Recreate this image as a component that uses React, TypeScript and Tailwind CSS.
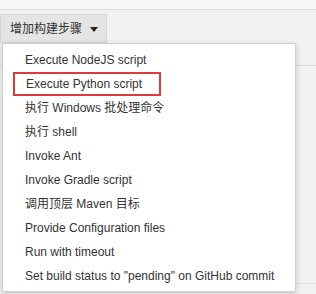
import React from "react";

const ITEMS = [
  "Execute NodeJS script",
  "Execute Python script",
  "执行 Windows 批处理命令",
  "执行 shell",
  "Invoke Ant",
  "Invoke Gradle script",
  "调用顶层 Maven 目标",
  "Provide Configuration files",
  "Run with timeout",
  'Set build status to "pending" on GitHub commit',
];

export default function App() {
  return (
    <div
      className="relative h-[294px] w-[316px] overflow-hidden bg-[#f2f2f2] text-[#333]"
      style={{ fontFamily: '"Liberation Sans", Arial, "Noto Sans CJK SC", sans-serif' }}
    >
      {/* page behind */}
      <div className="h-[10px] bg-[#f7f7f7] border-b border-[#dcdcdc]" />
      <div className="h-[4px]" />
      <button className="flex h-[29px] w-[107px] items-center gap-[8px] border border-[#d6d6d6] bg-[#e4e4e4] pl-[9px] text-[12px] text-[#333]">
        <span>增加构建步骤</span>
        <svg width="8" height="5" viewBox="0 0 8 5" className="mt-[1px]">
          <path d="M0 0h8L4 5z" fill="#222" />
        </svg>
      </button>
      <div className="mt-[22px] h-[218px] border-t border-[#dedede]" />
      <div className="border-t border-[#dedede]" />

      {/* dropdown menu */}
      <div className="absolute left-[2px] top-[43px] w-[294px] border border-[#cfcfcf] bg-white pt-[4px] pb-[3px] shadow-[0_2px_6px_rgba(0,0,0,0.18)]">
        {ITEMS.map((label, i) => (
          <div
            key={label}
            className={
              i === 1
                ? "mx-[10px] flex h-[24px] w-[148px] items-center border-2 border-[#e0393b] pl-[11px] text-[12px]"
                : "flex h-[24px] items-center pl-[22px] text-[12px]"
            }
          >
            {label}
          </div>
        ))}
      </div>
    </div>
  );
}
